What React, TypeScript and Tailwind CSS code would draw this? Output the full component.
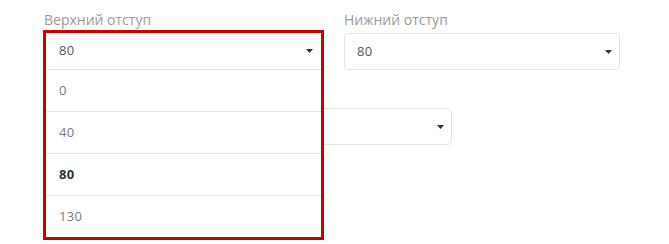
import React from 'react';

const Caret: React.FC = () => (
  <svg width="7" height="4" viewBox="0 0 7 4" className="shrink-0">
    <path d="M0 0H7L3.5 4Z" fill="#333" />
  </svg>
);

interface SelectBoxProps {
  value?: string;
  className?: string;
}

const SelectBox: React.FC<SelectBoxProps> = ({ value, className }) => (
  <div
    className={`h-[37px] border border-[#e4e4e4] rounded-[4px] bg-white flex items-center justify-between pl-[12px] pr-[7px] text-[13px] tracking-[0.3px] text-[#555] ${className ?? ''}`}
  >
    <span>{value}</span>
    <Caret />
  </div>
);

const options = [
  { label: '0', selected: false },
  { label: '40', selected: false },
  { label: '80', selected: true },
  { label: '130', selected: false },
];

export default function App() {
  return (
    <div className="relative w-[669px] h-[244px] bg-white overflow-hidden font-['Open_Sans',sans-serif]">
      <div className="pl-[44px] pt-[11px]">
        <div className="flex gap-[24px]">
          <div className="w-[276px]">
            <div className="text-[14px] leading-[18px] text-[#9b9b9b] mb-[4px]">Верхний отступ</div>
            {/* opened select, outlined in red */}
            <div className="relative h-[37px] z-10">
              <div className="absolute -left-[1px] -top-[3px] w-[281px] border-[3px] border-[#c40000] bg-white">
                <div className="h-[37px] flex items-center justify-between pl-[13px] pr-[8px] text-[13px] tracking-[0.3px] text-[#555] border-b border-[#e2e2e2]">
                  <span>80</span>
                  <Caret />
                </div>
                {options.map((o, i) => (
                  <div
                    key={o.label}
                    className={`flex items-center pl-[13px] text-[13px] tracking-[0.3px] ${i < options.length - 1 ? 'h-[42px] border-b border-[#e2e2e2]' : 'h-[41px]'} ${o.selected ? 'font-bold text-[#333]' : 'text-[#7a7a7a]'}`}
                  >
                    {o.label}
                  </div>
                ))}
              </div>
            </div>
          </div>
          <div className="w-[276px]">
            <div className="text-[14px] leading-[18px] text-[#9b9b9b] mb-[4px]">Нижний отступ</div>
            <SelectBox value="80" />
          </div>
        </div>
        <div className="mt-[38px] w-[408px]">
          <SelectBox />
        </div>
      </div>
    </div>
  );
}
